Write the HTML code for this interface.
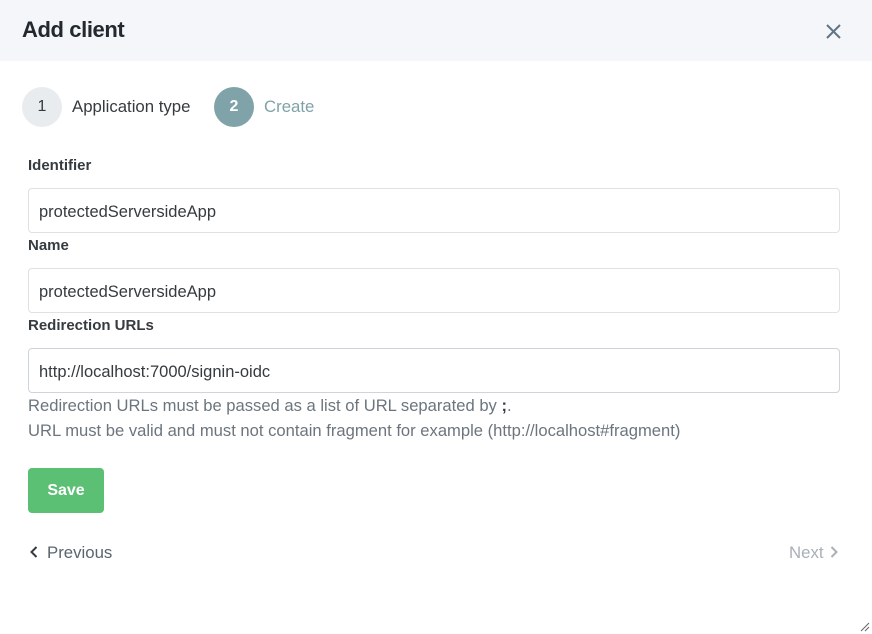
<!DOCTYPE html>
<html><head><meta charset="utf-8"><style>
*{box-sizing:border-box;margin:0;padding:0}
body{width:872px;height:634px;background:#fff;font-family:"Liberation Sans",sans-serif;color:#363b3f;position:relative;overflow:hidden}
.hdr{position:absolute;left:0;top:0;width:872px;height:61px;background:#f5f6f9}
.hdr h1{position:absolute;left:22px;top:17px;font-size:22px;font-weight:bold;color:#23292e;letter-spacing:-0.4px}
.x{position:absolute;left:825px;top:23px}
.circ{position:absolute;width:40px;height:40px;border-radius:50%;text-align:center;line-height:40px;font-size:16px}
.t{position:absolute;font-size:16.8px;white-space:nowrap}
.lbl{position:absolute;left:28px;font-size:15px;font-weight:bold;color:#363b3f}
.inp{position:absolute;left:28px;width:812px;height:45px;border:1px solid #dfe2e5;border-radius:4px;padding-left:10px;line-height:46px;font-size:16.5px;color:#363b3f}
.help{position:absolute;left:28px;font-size:16.6px;color:#6c757d;white-space:nowrap}
.save{position:absolute;left:28px;top:468px;width:76px;height:45px;background:#5bbf74;border-radius:4px;color:#fff;font-weight:bold;font-size:16px;text-align:center;line-height:45px}
</style></head><body>
<div class="hdr"><h1>Add client</h1>
<svg class="x" width="17" height="17" viewBox="0 0 17 17"><path d="M2 2L15 15M15 2L2 15" stroke="#5f7486" stroke-width="2" fill="none"/></svg></div>
<div class="circ" style="left:22px;top:87px;background:#e9ecef;color:#363b3f">1</div>
<div class="t" style="left:72px;top:97px;color:#363b3f">Application type</div>
<div class="circ" style="left:214px;top:87px;background:#7fa3a9;color:#fff;font-weight:bold">2</div>
<div class="t" style="left:264px;top:97px;color:#7fa3a9">Create</div>
<div class="lbl" style="top:157px">Identifier</div>
<div class="inp" style="top:188px">protectedServersideApp</div>
<div class="lbl" style="top:237px">Name</div>
<div class="inp" style="top:268px">protectedServersideApp</div>
<div class="lbl" style="top:317px">Redirection URLs</div>
<div class="inp" style="top:348px;border-color:#ced4da">http://localhost:7000/signin-oidc</div>
<div class="help" style="top:396px">Redirection URLs must be passed as a list of URL separated by <b style="color:#363b3f">;</b>.</div>
<div class="help" style="top:421px">URL must be valid and must not contain fragment for example (http://localhost#fragment)</div>
<div class="save">Save</div>
<svg style="position:absolute;left:30px;top:546px" width="8" height="12" viewBox="0 0 8 12"><path d="M6.5 1L1.5 6L6.5 11" stroke="#363b3f" stroke-width="2" fill="none"/></svg>
<div class="t" style="left:47px;top:543px;color:#5a6570">Previous</div>
<div class="t" style="left:789px;top:543px;color:#a9b0b6">Next</div>
<svg style="position:absolute;left:830px;top:546px" width="8" height="12" viewBox="0 0 8 12"><path d="M1.5 1L6.5 6L1.5 11" stroke="#a9b0b6" stroke-width="2" fill="none"/></svg>
<svg style="position:absolute;left:860px;top:622px" width="10" height="10" viewBox="0 0 10 10"><path d="M1 9L9 1M5 9L9 5" stroke="#666" stroke-width="1" fill="none"/></svg>
</body></html>
